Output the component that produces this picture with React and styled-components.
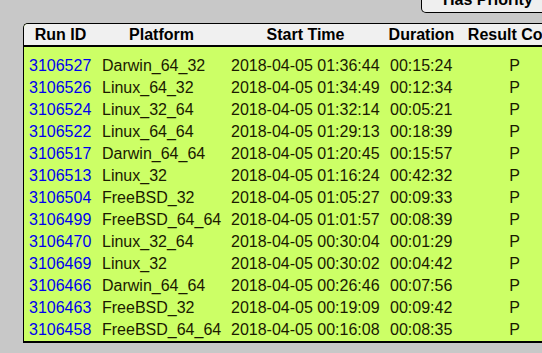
import React from 'react'
import styled, { createGlobalStyle } from 'styled-components'

const runs = [
  ['3106527', 'Darwin_64_32', '2018-04-05 01:36:44', '00:15:24', 'P'],
  ['3106526', 'Linux_64_32', '2018-04-05 01:34:49', '00:12:34', 'P'],
  ['3106524', 'Linux_32_64', '2018-04-05 01:32:14', '00:05:21', 'P'],
  ['3106522', 'Linux_64_64', '2018-04-05 01:29:13', '00:18:39', 'P'],
  ['3106517', 'Darwin_64_64', '2018-04-05 01:20:45', '00:15:57', 'P'],
  ['3106513', 'Linux_32', '2018-04-05 01:16:24', '00:42:32', 'P'],
  ['3106504', 'FreeBSD_32', '2018-04-05 01:05:27', '00:09:33', 'P'],
  ['3106499', 'FreeBSD_64_64', '2018-04-05 01:01:57', '00:08:39', 'P'],
  ['3106470', 'Linux_32_64', '2018-04-05 00:30:04', '00:01:29', 'P'],
  ['3106469', 'Linux_32', '2018-04-05 00:30:02', '00:04:42', 'P'],
  ['3106466', 'Darwin_64_64', '2018-04-05 00:26:46', '00:07:56', 'P'],
  ['3106463', 'FreeBSD_32', '2018-04-05 00:19:09', '00:09:42', 'P'],
  ['3106458', 'FreeBSD_64_64', '2018-04-05 00:16:08', '00:08:35', 'P'],
]

const GlobalStyle = createGlobalStyle`
  html, body {
    margin: 0;
    padding: 0;
    background: #c8c8c8;
  }
  body {
    font-family: 'Liberation Sans', Arial, sans-serif;
    font-size: 16px;
  }
`

const App = () => {
  return (
    <Page>
      <GlobalStyle />
      <Toolbar>
        <PriorityButton>Has Priority</PriorityButton>
      </Toolbar>
      <Panel>
        <HeaderRow>
          <HeadCell>Run ID</HeadCell>
          <HeadCell>Platform</HeadCell>
          <HeadCell>Start Time</HeadCell>
          <HeadCell>Duration</HeadCell>
          <HeadCell>Result Code</HeadCell>
        </HeaderRow>
        <Body>
          {runs.map(([id, platform, start, duration, result]) => (
            <Row key={id}>
              <Cell>
                <RunLink href='#'>{id}</RunLink>
              </Cell>
              <Cell>{platform}</Cell>
              <Cell>{start}</Cell>
              <Cell>{duration}</Cell>
              <Cell center>{result}</Cell>
            </Row>
          ))}
        </Body>
      </Panel>
    </Page>
  )
}

const Page = styled.div`
  width: 542px;
  height: 353px;
  overflow: hidden;
  background: #c8c8c8;
`

// the button sits mostly above the top edge, only its lower part shows
const Toolbar = styled.div`
  height: 13px;
  display: flex;
  align-items: flex-end;
  padding-left: 421px;
  overflow: hidden;
`

const PriorityButton = styled.div`
  flex: none;
  width: 140px;
  height: 30px;
  box-sizing: border-box;
  padding: 6px 0 0 21px;
  background: #efefef;
  border: 1px solid #000;
  border-top: none;
  border-bottom-left-radius: 5px;
  font-weight: bold;
  line-height: 22px;
  color: #000;
`

const Panel = styled.div`
  margin: 10px 0 0 23px;
  width: 560px;
  border: 1px solid #000;
  border-right: none;
  border-bottom: 2px solid #000;
  border-top-left-radius: 5px;
  overflow: hidden;
  background: #ccff66;
`

const columns = '73px 129px 159px 73px 113px'

const HeaderRow = styled.div`
  display: grid;
  grid-template-columns: ${columns};
  height: 21px;
  background: #f0f0f0;
  border-bottom: 2px solid #000;
`

const HeadCell = styled.div`
  text-align: center;
  white-space: nowrap;
  font-weight: bold;
  line-height: 21px;
  color: #000;
`

const Body = styled.div`
  padding-top: 8px;
`

const Row = styled.div`
  display: grid;
  grid-template-columns: ${columns};
  height: 22px;
`

const Cell = styled.div`
  padding-left: ${(p) => (p.center ? 0 : '5px')};
  text-align: ${(p) => (p.center ? 'center' : 'left')};
  white-space: nowrap;
  line-height: 22px;
  color: #1a1a00;
`

const RunLink = styled.a`
  color: #0000ee;
  text-decoration: none;
`

export default App
